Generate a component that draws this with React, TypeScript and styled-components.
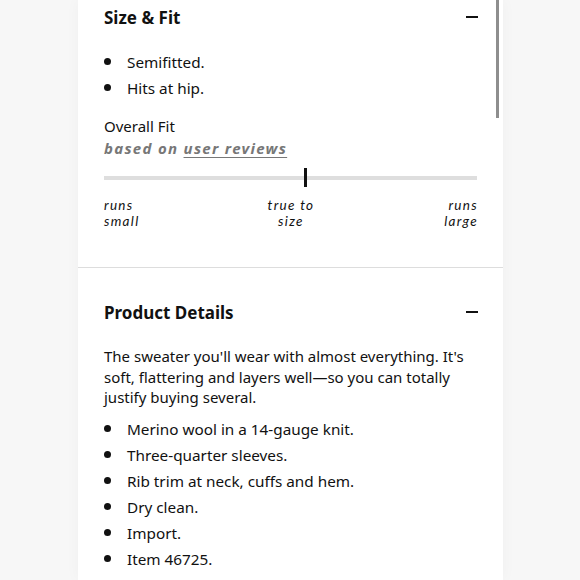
import styled, { createGlobalStyle } from "styled-components";

const GlobalStyle = createGlobalStyle`
  body {
    margin: 0;
    background: #f7f7f7;
    font-family: "Noto Sans", "Lato", sans-serif;
    color: #111;
  }
`;

const Panel = styled.div`
  position: relative;
  width: 425px;
  height: 580px;
  margin-left: 78px;
  background: #ffffff;
  box-shadow: 0 0 14px rgba(0, 0, 0, 0.035);
  overflow: hidden;
`;

const ScrollThumb = styled.div`
  position: absolute;
  top: 0;
  right: 4px;
  width: 3px;
  height: 118px;
  background: #8e8e8e;
`;

const Section = styled.section<{ $top: number; $bottom: number }>`
  padding: ${(p) => p.$top}px 25px ${(p) => p.$bottom}px 26px;
  border-bottom: 1px solid #dddddd;
  &:last-child {
    border-bottom: none;
  }
`;

const Header = styled.div`
  display: flex;
  justify-content: space-between;
  align-items: center;
  height: 24px;
`;

const Title = styled.h2`
  margin: 0;
  font-size: 17px;
  font-weight: 700;
`;

const Minus = styled.span`
  width: 12px;
  height: 2px;
  background: #111;
`;

const BulletList = styled.ul<{ $top: number }>`
  list-style: none;
  margin: ${(p) => p.$top}px 0 0;
  padding: 0;
`;

const Bullet = styled.li`
  position: relative;
  padding-left: 23px;
  height: 26px;
  line-height: 26px;
  font-size: 15.3px;
  &::before {
    content: "";
    position: absolute;
    left: 0;
    top: 9px;
    width: 7px;
    height: 7px;
    border-radius: 50%;
    background: #111;
  }
`;

const FitLabel = styled.div`
  margin-top: 14px;
  font-size: 15px;
  line-height: 22px;
`;

const FitSource = styled.div`
  font-size: 15px;
  line-height: 22px;
  font-weight: 700;
  font-style: italic;
  letter-spacing: 1.3px;
  color: #777;
  & a {
    color: inherit;
    text-decoration: underline;
    text-underline-offset: 3px;
  }
`;

const Track = styled.div`
  position: relative;
  margin-top: 17px;
  margin-right: 1px;
  height: 4px;
  background: #dedede;
`;

const Marker = styled.div`
  position: absolute;
  left: 200px;
  top: -8px;
  width: 3px;
  height: 19px;
  background: #111;
`;

const Scale = styled.div`
  display: grid;
  grid-template-columns: 1fr 1fr 1fr;
  margin-top: 17px;
`;

const ScaleLabel = styled.div<{ $align: "left" | "center" | "right" }>`
  text-align: ${(p) => p.$align};
  font-family: "Lato", "Noto Sans", sans-serif;
  font-size: 13.5px;
  line-height: 16px;
  font-style: italic;
  letter-spacing: 1.3px;
  color: #111;
`;

const Paragraph = styled.p`
  margin: 22px 0 0;
  font-size: 15px;
  line-height: 20.5px;
`;

const sizeFit = ["Semifitted.", "Hits at hip."];

const details = [
  "Merino wool in a 14-gauge knit.",
  "Three-quarter sleeves.",
  "Rib trim at neck, cuffs and hem.",
  "Dry clean.",
  "Import.",
  "Item 46725.",
];

const App = () => {
  return (
    <>
      <GlobalStyle />
      <Panel>
        <ScrollThumb />
        <Section $top={5} $bottom={38}>
          <Header>
            <Title>Size &amp; Fit</Title>
            <Minus />
          </Header>
          <BulletList $top={20}>
            {sizeFit.map((item) => (
              <Bullet key={item}>{item}</Bullet>
            ))}
          </BulletList>
          <FitLabel>Overall Fit</FitLabel>
          <FitSource>
            based on <a>user reviews</a>
          </FitSource>
          <Track>
            <Marker />
          </Track>
          <Scale>
            <ScaleLabel $align="left">
              runs
              <br />
              small
            </ScaleLabel>
            <ScaleLabel $align="center">
              true to
              <br />
              size
            </ScaleLabel>
            <ScaleLabel $align="right">
              runs
              <br />
              large
            </ScaleLabel>
          </Scale>
        </Section>
        <Section $top={32} $bottom={20}>
          <Header>
            <Title>Product Details</Title>
            <Minus />
          </Header>
          <Paragraph>
            The sweater you'll wear with almost everything. It's soft,
            flattering and layers well—so you can totally justify buying
            several.
          </Paragraph>
          <BulletList $top={8}>
            {details.map((item) => (
              <Bullet key={item}>{item}</Bullet>
            ))}
          </BulletList>
        </Section>
      </Panel>
    </>
  );
};

export default App;
